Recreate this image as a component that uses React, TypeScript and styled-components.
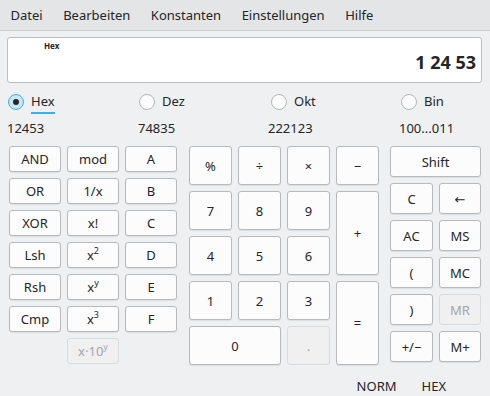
import React from 'react';
import styled, { createGlobalStyle, css } from 'styled-components';

const GlobalStyle = createGlobalStyle`
  html, body {
    margin: 0;
    padding: 0;
    background: #eff0f1;
  }
  body {
    font-family: 'Noto Sans', 'DejaVu Sans', sans-serif;
    font-size: 13px;
    color: #232629;
  }
`;

const Sup = styled.sup`
  font-size: 9px;
  line-height: 0;
  vertical-align: 6px;
`;

const MENU = ['Datei', 'Bearbeiten', 'Konstanten', 'Einstellungen', 'Hilfe'];

const BASES = [
  { name: 'Hex', value: '12453', checked: true },
  { name: 'Dez', value: '74835', checked: false },
  { name: 'Okt', value: '222123', checked: false },
  { name: 'Bin', value: '100...011', checked: false },
];

type Key = {
  label: React.ReactNode;
  disabled?: boolean;
  span?: number;
  rows?: number;
};

const LEFT_KEYS: Key[] = [
  { label: 'AND' }, { label: 'mod' }, { label: 'A' },
  { label: 'OR' }, { label: '1/x' }, { label: 'B' },
  { label: 'XOR' }, { label: 'x!' }, { label: 'C' },
  { label: 'Lsh' }, { label: <>x<Sup>2</Sup></> }, { label: 'D' },
  { label: 'Rsh' }, { label: <>x<Sup>y</Sup></> }, { label: 'E' },
  { label: 'Cmp' }, { label: <>x<Sup>3</Sup></> }, { label: 'F' },
];

const NUM_KEYS: Key[] = [
  { label: '%' }, { label: '÷' }, { label: '×' }, { label: '−' },
  { label: '7' }, { label: '8' }, { label: '9' }, { label: '+', rows: 2 },
  { label: '4' }, { label: '5' }, { label: '6' },
  { label: '1' }, { label: '2' }, { label: '3' }, { label: '=', rows: 2 },
  { label: '0', span: 2 }, { label: '.', disabled: true },
];

const RIGHT_KEYS: Key[] = [
  { label: 'Shift', span: 2 },
  { label: 'C' }, { label: '←' },
  { label: 'AC' }, { label: 'MS' },
  { label: '(' }, { label: 'MC' },
  { label: ')' }, { label: 'MR', disabled: true },
  { label: '+/−' }, { label: 'M+' },
];

const App = () => {
  const renderKeys = (keys: Key[]) =>
    keys.map((k, i) => (
      <KeyButton key={i} $disabled={k.disabled} $span={k.span} $rows={k.rows}>
        <KeyLabel>{k.label}</KeyLabel>
      </KeyButton>
    ));

  return (
    <Window>
      <GlobalStyle />
      <MenuBar>
        {MENU.map((m) => (
          <MenuItem key={m}>{m}</MenuItem>
        ))}
      </MenuBar>

      <Display>
        <DisplayBase>Hex</DisplayBase>
        <DisplayValue>1 24 53</DisplayValue>
      </Display>

      <BaseGrid>
        {BASES.map((b) => (
          <RadioLabel key={b.name}>
            <RadioCircle $checked={b.checked} />
            <RadioText $checked={b.checked}>{b.name}</RadioText>
          </RadioLabel>
        ))}
      </BaseGrid>
      <ValueGrid>
        {BASES.map((b) => (
          <span key={b.name}>{b.value}</span>
        ))}
      </ValueGrid>

      <Keypad>
        <LeftPad>
          {renderKeys(LEFT_KEYS)}
          <Spacer />
          <KeyButton $disabled>
            <KeyLabel>
              x·10<Sup>y</Sup>
            </KeyLabel>
          </KeyButton>
        </LeftPad>
        <NumPad>{renderKeys(NUM_KEYS)}</NumPad>
        <RightPad>{renderKeys(RIGHT_KEYS)}</RightPad>
      </Keypad>

      <StatusBar>
        <span>NORM</span>
        <span>HEX</span>
      </StatusBar>
    </Window>
  );
};

export default App;

const Window = styled.div`
  width: 490px;
  height: 396px;
  overflow: hidden;
  background: #eff0f1;
`;

const MenuBar = styled.div`
  display: flex;
  height: 30px;
  align-items: center;
  padding-left: 0.5px;
  background: #e4e5e7;
  border-bottom: 1px solid #c9cbcd;
`;

const MenuItem = styled.span`
  padding: 0 10.5px 1px 10px;
  line-height: 18px;
`;

const Display = styled.div`
  box-sizing: border-box;
  display: flex;
  flex-direction: column;
  margin: 6px 8px 0 7px;
  height: 46px;
  padding: 2px 5px 0 36px;
  background: #ffffff;
  border: 1px solid #bcbec0;
  border-radius: 3px;
`;

const DisplayBase = styled.span`
  font-size: 8px;
  font-weight: 700;
  line-height: 10px;
  margin-top: 1px;
`;

const DisplayValue = styled.span`
  align-self: flex-end;
  font-size: 18px;
  font-weight: 700;
  line-height: 22px;
`;

const BaseGrid = styled.div`
  display: grid;
  grid-template-columns: 131px 132px 130px 1fr;
  margin: 10px 0 0 8px;
  height: 17px;
`;

const RadioLabel = styled.label`
  display: flex;
  align-items: center;
  gap: 7px;
`;

const RadioCircle = styled.span<{ $checked?: boolean }>`
  box-sizing: border-box;
  position: relative;
  width: 16px;
  height: 16px;
  border-radius: 50%;
  background: #fcfcfc;
  border: 1px solid #b3b5b7;
  ${({ $checked }) =>
    $checked &&
    css`
      background: #cde6f6;
      border-color: #3daee9;
      &::after {
        content: '';
        position: absolute;
        left: 4px;
        top: 4px;
        width: 6px;
        height: 6px;
        border-radius: 50%;
        background: #232629;
      }
    `}
`;

const RadioText = styled.span<{ $checked?: boolean }>`
  line-height: 17px;
  ${({ $checked }) =>
    $checked &&
    css`
      border-bottom: 2px solid #3daee9;
      margin-bottom: -4px;
      padding-bottom: 2px;
    `}
`;

const ValueGrid = styled.div`
  display: grid;
  grid-template-columns: 131px 130px 131px 1fr;
  margin: 9px 0 0 7px;
  line-height: 18px;
`;

const Keypad = styled.div`
  display: flex;
  align-items: flex-start;
  margin: 9px 0 0 9px;
`;

const Pad = styled.div`
  display: grid;
  gap: 6px;
`;

const LeftPad = styled(Pad)`
  grid-template-columns: repeat(3, 52px);
  grid-auto-rows: 26px;
`;

const NumPad = styled(Pad)`
  grid-template-columns: repeat(4, 43px);
  grid-auto-rows: 39px;
  margin-left: 12px;
`;

const RightPad = styled(Pad)`
  grid-template-columns: 43px 42px;
  grid-auto-rows: 31px;
  margin-left: 11px;
`;

const Spacer = styled.span``;

const KeyButton = styled.button<{ $disabled?: boolean; $span?: number; $rows?: number }>`
  box-sizing: border-box;
  display: flex;
  align-items: center;
  justify-content: center;
  padding: 0;
  font-family: inherit;
  font-size: 13px;
  color: #232629;
  background: #fcfcfc;
  border: 1px solid #b7b9bb;
  border-radius: 3px;
  box-shadow: 0 1px 1px rgba(0, 0, 0, 0.08);
  ${({ $span }) => $span && css`grid-column: span ${$span};`}
  ${({ $rows }) => $rows && css`grid-row: span ${$rows};`}
  ${({ $disabled }) =>
    $disabled &&
    css`
      color: #a3a5a7;
      background: #f0f0f1;
      border-color: #d8dadc;
      box-shadow: none;
    `}
`;

const KeyLabel = styled.span`
  line-height: 18px;
`;

const StatusBar = styled.div`
  display: flex;
  justify-content: flex-end;
  gap: 25px;
  margin-top: 12px;
  padding-right: 44px;
  line-height: 18px;
`;
